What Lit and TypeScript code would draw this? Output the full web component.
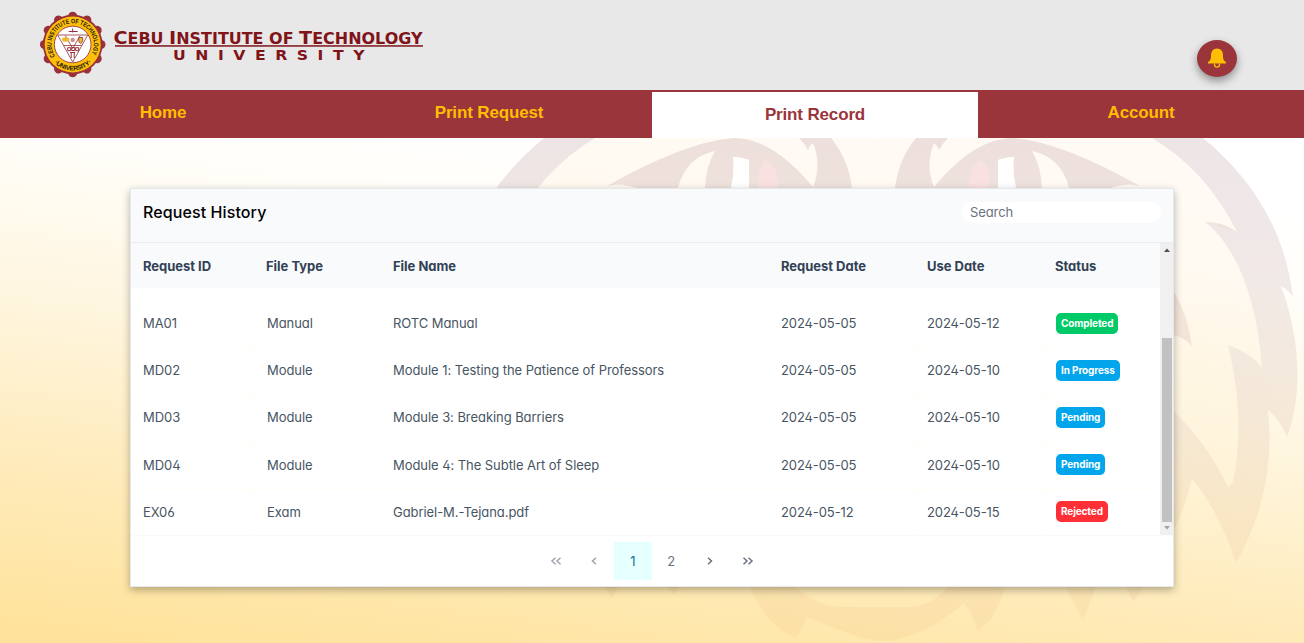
import { LitElement, html, svg, css } from "lit";
import { customElement } from "lit/decorators.js";

const rows = [
  ["MA01", "Manual", "ROTC Manual", "2024-05-05", "2024-05-12", "Completed"],
  ["MD02", "Module", "Module 1: Testing the Patience of Professors", "2024-05-05", "2024-05-10", "In Progress"],
  ["MD03", "Module", "Module 3: Breaking Barriers", "2024-05-05", "2024-05-10", "Pending"],
  ["MD04", "Module", "Module 4: The Subtle Art of Sleep", "2024-05-05", "2024-05-10", "Pending"],
  ["EX06", "Exam", "Gabriel-M.-Tejana.pdf", "2024-05-12", "2024-05-15", "Rejected"],
];
const heads = ["Request ID", "File Type", "File Name", "Request Date", "Use Date", "Status"];

const half = svg`
  <path fill="url(#cream)" d="M873.500 138 L1152 138 Q1206 170 1237 232 L1205 222 C1241 250 1258 310 1262 368 Q1251 353 1228 345 Q1246 420 1233 482 L1228 487 Q1205 440 1174 412 L1150 530 L873.500 530 Z"/>
  <path fill="url(#mane)" d="M1152 138 H1203 C1248 175 1284 225 1293 297 Q1289 291 1281 286 C1299 334 1304 392 1287 437 Q1280 420 1268 410 Q1277 490 1236 563 Q1218 509 1192 479 Q1186 504 1174 530 V412 Q1205 440 1228 487 L1233 482 Q1246 420 1228 345 Q1251 353 1262 368 C1258 310 1241 250 1205 222 Q1222 221 1237 232 Q1206 170 1152 138Z
   M1174 292 Q1188 315 1192 346 Q1185 338 1174 335Z"/>
  <path fill="url(#mane)" fill-rule="evenodd" d="M916 138 H948 Q943 143 939 150 Q938 146 934 143 Q925 165 934 187 C953 164 980 138 1014 138 Q1062 142 1140 186 Q1128 182 1110 188 H895 Q899 158 916 138Z M1042 188 H1069 Q1061 157 1032 151 Q1041 166 1042 188Z M998 160 V188 H1016 Q1012 171 1014 157 Q1007 157 998 160Z"/>
  <path fill="#fff" d="M998 160 Q1007 157 1014 157 Q1012 171 1016 188 H998Z"/>
  <path fill="#f9e1e2" d="M981 160 Q968 168 969 188 H989 Q990 167 981 160Z"/>`;

@customElement("app-root")
export class AppRoot extends LitElement {
  static styles = css`
    :host { display: block; width: 1304px; height: 643px; overflow: hidden; font-family: Inter, sans-serif; }
    * { box-sizing: border-box; }
    .page { position: relative; height: 643px; display: flex; flex-direction: column; background: linear-gradient(187deg, #fff 26%, #fffefa 36%, #fff6e0 56%, #ffebba 78%, #ffe39c 98%); }
    .art { position: absolute; inset: 0; width: 1304px; height: 643px; }
    header { position: relative; flex: none; height: 90px; background: #e8e8e8; display: flex; justify-content: space-between; padding: 0 67px 0 36px; }
    .bell { margin-top: 40px; width: 40px; height: 37px; border-radius: 50%; background: #99353b; box-shadow: 0 4px 8px rgba(0,0,0,.4); display: flex; justify-content: center; padding-top: 8px; }
    nav { position: relative; flex: none; height: 48px; display: grid; grid-template-columns: repeat(4, 1fr); background: #99353b; font: bold 17px/46px "Liberation Sans", Arial, sans-serif; letter-spacing: -.15px; color: #ffbd03; text-align: center; }
    .active { margin-top: 2px; background: #fff; color: #99353b; }
    .card { position: relative; margin: 50px 130px 0; height: 399px; background: #fff; border: 1px solid #e5e9ee; box-shadow: 0 3px 8px rgba(0,0,0,.3); display: flex; flex-direction: column; font-feature-settings: "cv02","cv03","cv04","cv11"; }
    .top { height: 54px; flex: none; background: #f8fafc; border-bottom: 1px solid #e9edf1; display: flex; justify-content: space-between; padding: 12px 12px 0; }
    .title { font-size: 16px; line-height: 23px; font-weight: 500; color: #000; letter-spacing: .1px; }
    .search { margin-top: 1px; width: 199px; height: 21px; border-radius: 10px; background: #fff; padding-left: 8px; color: #6b7280; font-size: 13px; line-height: 21px; letter-spacing: -.1px; }
    .scroll { display: flex; height: 292px; flex: none; }
    .table { flex: 1; }
    .row { display: grid; grid-template-columns: 123px 127px 388px 146px 128px 1fr; height: 47.2px; color: #475563; font-size: 13px; letter-spacing: -.06px; border-bottom: 1px solid #fffdf5; }
    .row > div { padding: 0 12px; display: flex; align-items: center; border-right: 1px solid transparent; }
    .row:not(.head) > div:nth-child(1), .row:not(.head) > div:nth-child(4), .row:not(.head) > div:nth-child(5) { border-right-color: #fffdf5; }
    .row:not(.head) > div:nth-child(4), .row:not(.head) > div:nth-child(5) { letter-spacing: -.1px; }
    .head { height: 45px; padding-top: 1px; background: #f8fafc; color: #334155; font-weight: 700; letter-spacing: -.02px; border: 0; margin-bottom: 12px; }
    .row:not(.head) > div:nth-child(2), .row:not(.head) > div:nth-child(6) { padding-left: 13px; }
    .tag { height: 21px; line-height: 20px; border-radius: 5px; padding: 0 5px; color: #fff; font-size: 10px; font-weight: 700; letter-spacing: -.12px; background: #00a5ec; }
    .Completed { background: #00ca68; }
    .Rejected { background: #ff3035; }
    .bar { width: 13px; background: #f0f0f0; display: flex; flex-direction: column; align-items: center; padding: 5px 0 5px; }
    .thumb { width: 10px; height: 184px; margin: auto 0 4px; background: #c1c1c1; }
    .pager { flex: 1; display: flex; justify-content: center; padding-top: 6px; font-size: 13px; color: #6b7280; border-top: 1px solid #fafafa; }
    .pager > div { width: 38.4px; height: 38px; display: flex; align-items: center; justify-content: center; }
    .pager .on { background: #e6ffff; color: #0e7490; }
    .off { opacity: .65; }
  `;

  seal() {
    return svg`
      <g transform="translate(36.7 44.5)">
        ${Array.from({ length: 12 }, (_, i) => svg`<circle cy="-28.200" r="4.600" fill="#99303a" transform="rotate(${i * 30})"/>`)}
        <circle r="29.8" fill="#99303a"/><circle r="28" fill="#fdbf0c"/>
        <circle r="18.3" fill="#fff" stroke="#8b2630" stroke-width=".8"/>
        <path id="ringTop" d="M-17.2 12.4 A21.2 21.2 0 1 1 17.200 12.400" fill="none"/>
        <path id="ringLow" d="M-20.5 16 A26 26 0 0 0 20.5 16" fill="none"/>
        <g font-family="Liberation Sans" font-weight="bold" font-size="6.600" fill="#241a08">
          <text><textPath href="#ringTop" textLength="88" lengthAdjust="spacingAndGlyphs" startOffset="1">CEBU INSTITUTE OF TECHNOLOGY</textPath></text>
          <text><textPath href="#ringLow" textLength="41" startOffset="3.500">·UNIVERSITY·</textPath></text>
        </g>
        <path d="M-15 -9.5H15L0 17.5Z M-9 1H9 M-7.5 -9 L0 4 L7.5 -9" fill="none" stroke="#94303a" stroke-width=".8"/>
        <path d="M-4 -13h9 M0-16v4 M-5 3.2h3v3h-3z M-1 3h3v3h-3z M3 3.2h3v3h-3z M-2.5 8h5 M-1.5 8.5v5 M1.5 8.5v5" fill="none" stroke="#94303a" stroke-width="1"/>
        <ellipse cx="-7" cy="-5" rx="3.7" ry="2.2" fill="#edb72d"/>
        <path d="M6-7h4v3q-1 3-2 3q-2-1-2-3z" fill="#edb72d" stroke="#94303a" stroke-width=".8"/>
        <circle cx="0" cy="-4.5" r="2.2" fill="#d58d92"/>
      </g>`;
  }

  render() {
    return html`<div class="page">
      <svg class="art" viewBox="0 0 1304 643">
        <defs>
          <linearGradient id="mane" gradientUnits="userSpaceOnUse" x1="0" y1="138" x2="0" y2="643">
            <stop offset="0" stop-color="#702838" stop-opacity=".125"/><stop offset=".5" stop-color="#803838" stop-opacity=".085"/><stop offset="1" stop-color="#d0782a" stop-opacity=".06"/>
          </linearGradient>
          <linearGradient id="cream" gradientUnits="userSpaceOnUse" x1="0" y1="138" x2="0" y2="520">
            <stop offset="0" stop-color="#ffb04d" stop-opacity=".065"/><stop offset=".6" stop-color="#ffb04d" stop-opacity=".05"/><stop offset="1" stop-color="#ffc04d" stop-opacity="0"/>
          </linearGradient>
        </defs>
        ${half}<g transform="translate(1747 0) scale(-1 1)">${half}</g>
        <path fill="url(#mane)" d="M750 587 Q764 624 795 638 Q803 630 806 617 L855 636 Q881 645 905 637 Q936 628 964 603 Q973 613 977 631 Q996 620 1005 587 H948 Q930 607 908 607 H840 Q820 607 795 587Z M1065 587 L1083 620 L1096 587Z M1126 587 L1133 602 L1144 587Z M604 587 L612 598 L618 587Z M666 587 L674 594 L680 587Z"/>
      </svg>
      <header>
        <svg width="400" height="90">${this.seal()}
          <g fill="#7f1419" font-family="DejaVu Sans" font-weight="bold">
            <text x="77.500" y="43.500" font-size="15" textLength="309" lengthAdjust="spacingAndGlyphs"><tspan font-size="18">C</tspan>EBU <tspan font-size="18">I</tspan>NSTITUTE OF <tspan font-size="18">T</tspan>ECHNOLOGY</text>
            <rect x="79" y="45.200" width="308" height="1.5"/>
            <text transform="translate(137 60) scale(1.12 1)" font-size="14" textLength="171">UNIVERSITY</text>
          </g>
        </svg>
        <div class="bell"><svg width="18" height="21" viewBox="0 0 18 21"><path d="M9 .5C13 .5 15 3.500 15 7.500c0 4 .7 5 3 6.500v1.500H0V14c2.300-1.500 3-2.500 3-6.500 0-4 2-7 6-7z" fill="#ffbd03"/><path d="M6.400 15.500a2.600 3.600 0 0 0 5.200 0" fill="none" stroke="#ffbd03" stroke-width="1.400"/></svg></div>
      </header>
      <nav><div>Home</div><div>Print Request</div><div class="active">Print Record</div><div>Account</div></nav>
      <div class="card">
        <div class="top"><div class="title">Request History</div><div class="search">Search</div></div>
        <div class="scroll">
          <div class="table">
            <div class="row head">${heads.map((h) => html`<div>${h}</div>`)}</div>
            ${rows.map((r) => html`<div class="row">${r.map((c, i) => html`<div>${i === 5 ? html`<span class="tag ${c}">${c}</span>` : c}</div>`)}</div>`)}
          </div>
          <div class="bar">
            <svg width="6" height="4"><path d="M0 4L3 0.500L6 4Z" fill="#505050"/></svg>
            <div class="thumb"></div>
            <svg width="6" height="4"><path d="M0 0L3 3.500L6 0Z" fill="#a3a3a3"/></svg>
          </div>
        </div>
        <div class="pager">
          ${[0, 1, 2, 3, 4, 5].map((i) => i === 2 || i === 3
            ? html`<div class=${i === 2 ? "on" : ""}>${i - 1}</div>`
            : html`<div class=${i < 2 ? "off" : ""}><svg width="12" height="8" fill="none" stroke="#6b7280" stroke-width="1.500"><path d=${["M5.500.700L2 4l3.500 3.300M10.500.700L7 4l3.500 3.300", "M8 .700L4.500 4 8 7.300", "", "", "M4 .700L7.500 4 4 7.300", "M1.500.700L5 4 1.500 7.300M6.500.700L10 4 6.500 7.300"][i]}/></svg></div>`)}
        </div>
      </div>
    </div>`;
  }
}
